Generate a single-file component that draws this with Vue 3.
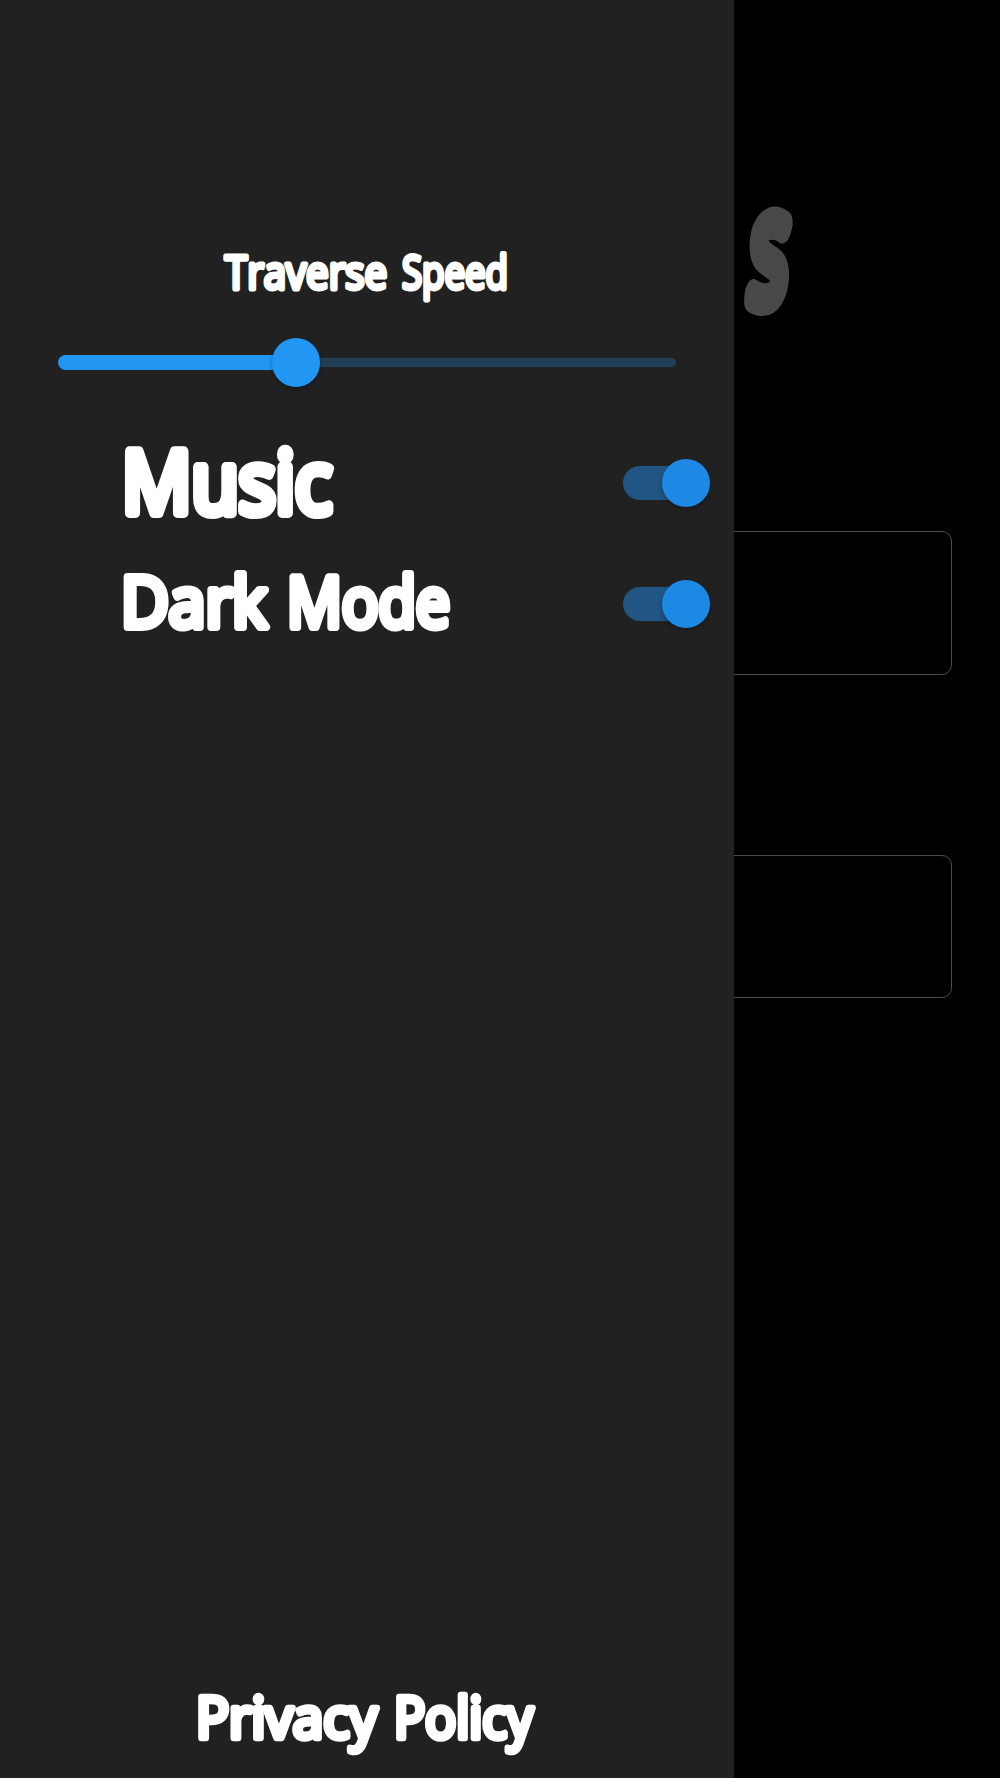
<script setup>
const title = {
  size: 46, stroke: 4.8, y: 49,
  words: [{ t: 'Traverse', x: 225, w: 162 }, { t: 'Speed', x: 402, w: 106 }],
}
const rows = [
  { size: 86, stroke: 10.2, y: 90, words: [{ t: 'Music', x: 122, w: 210 }] },
  {
    size: 70, stroke: 8, y: 83,
    words: [{ t: 'Dark', x: 121, w: 146 }, { t: 'Mode', x: 287, w: 163 }],
  },
]
const policy = {
  size: 56, stroke: 6.4, y: 67.5,
  words: [{ t: 'Privacy', x: 196, w: 181 }, { t: 'Policy', x: 394, w: 139 }],
}
const speed = 38.5
</script>

<template>
  <div class="screen">
    <main class="page">
      <svg class="logo" viewBox="0 0 90 140" aria-label="S">
        <text transform="translate(13.5 111) skewX(-5) scale(.56 1)" font-size="111">S</text>
      </svg>
      <div class="card"></div>
      <div class="card"></div>
    </main>
    <aside class="drawer">
      <svg class="line title" width="734" height="70">
        <text :y="title.y" :font-size="title.size" :stroke-width="title.stroke">
          <tspan v-for="w in title.words" :key="w.t" :x="w.x" :textLength="w.w" lengthAdjust="spacingAndGlyphs">{{ w.t }}</tspan>
        </text>
      </svg>
      <div class="slider">
        <div class="active" :style="{ width: speed + '%' }"></div>
        <div class="thumb"></div>
        <div class="rest"></div>
      </div>
      <div v-for="(r, i) in rows" :key="i" class="row">
        <svg class="line" width="600" height="121">
          <text :y="r.y" :font-size="r.size" :stroke-width="r.stroke">
            <tspan v-for="w in r.words" :key="w.t" :x="w.x" :textLength="w.w" lengthAdjust="spacingAndGlyphs">{{ w.t }}</tspan>
          </text>
        </svg>
        <div class="switch"><div class="thumb knob"></div></div>
      </div>
      <svg class="line policy" width="734" height="108">
        <text :y="policy.y" :font-size="policy.size" :stroke-width="policy.stroke">
          <tspan v-for="w in policy.words" :key="w.t" :x="w.x" :textLength="w.w" lengthAdjust="spacingAndGlyphs">{{ w.t }}</tspan>
        </text>
      </svg>
    </aside>
  </div>
</template>

<style>
body { background: #000; }
</style>

<style scoped>
.screen {
  position: relative;
  width: 1000px;
  height: 1778px;
  overflow: hidden;
  background: #000;
  font-family: "Open Sans", "Noto Sans", sans-serif;
}
.page {
  box-sizing: border-box;
  height: 100%;
  padding: 190px 48px 0;
  display: flex;
  flex-direction: column;
}
.logo {
  width: 90px;
  height: 140px;
  margin: 0 0 201px 687px;
  flex: none;
  overflow: visible;
}
.logo text {
  font-weight: 300;
  fill: #484848;
  stroke: #484848;
  stroke-width: 28px;
  stroke-linejoin: round;
}
.card {
  box-sizing: border-box;
  height: 143.5px;
  flex: none;
  border: 1px solid #4c4c4c;
  border-radius: 10px;
}
.card + .card { margin-top: 180px; }
.drawer {
  position: absolute;
  inset: 0 auto 0 0;
  width: 734px;
  box-sizing: border-box;
  padding-top: 240px;
  background: #212121;
  display: flex;
  flex-direction: column;
}
.line {
  display: block;
  flex: none;
  overflow: visible;
}
.line text {
  font-weight: 400;
  fill: #fff;
  stroke: #fff;
  stroke-linejoin: round;
}
.slider {
  height: 49px;
  margin: 28px 58px 35.5px;
  display: flex;
  align-items: center;
}
.active {
  height: 15px;
  margin-right: -24px;
  border-radius: 8px;
  background: #2196f3;
}
.thumb {
  position: relative;
  width: 48.5px;
  height: 48.5px;
  flex: none;
  border-radius: 50%;
  background: #2196f3;
  box-shadow: 0 2px 4px rgba(0, 0, 0, .3);
}
.rest {
  flex: 1;
  height: 9.5px;
  border-radius: 0 5px 5px 0;
  background: #213f56;
}
.row {
  height: 121px;
  display: flex;
  align-items: center;
}
.switch {
  width: 79px;
  height: 34px;
  margin-left: 23px;
  display: flex;
  align-items: center;
  border-radius: 17px;
  background: #205584;
}
.knob {
  margin-left: 38.5px;
  background: #1e88e5;
}
.policy { margin-top: auto; }
</style>
